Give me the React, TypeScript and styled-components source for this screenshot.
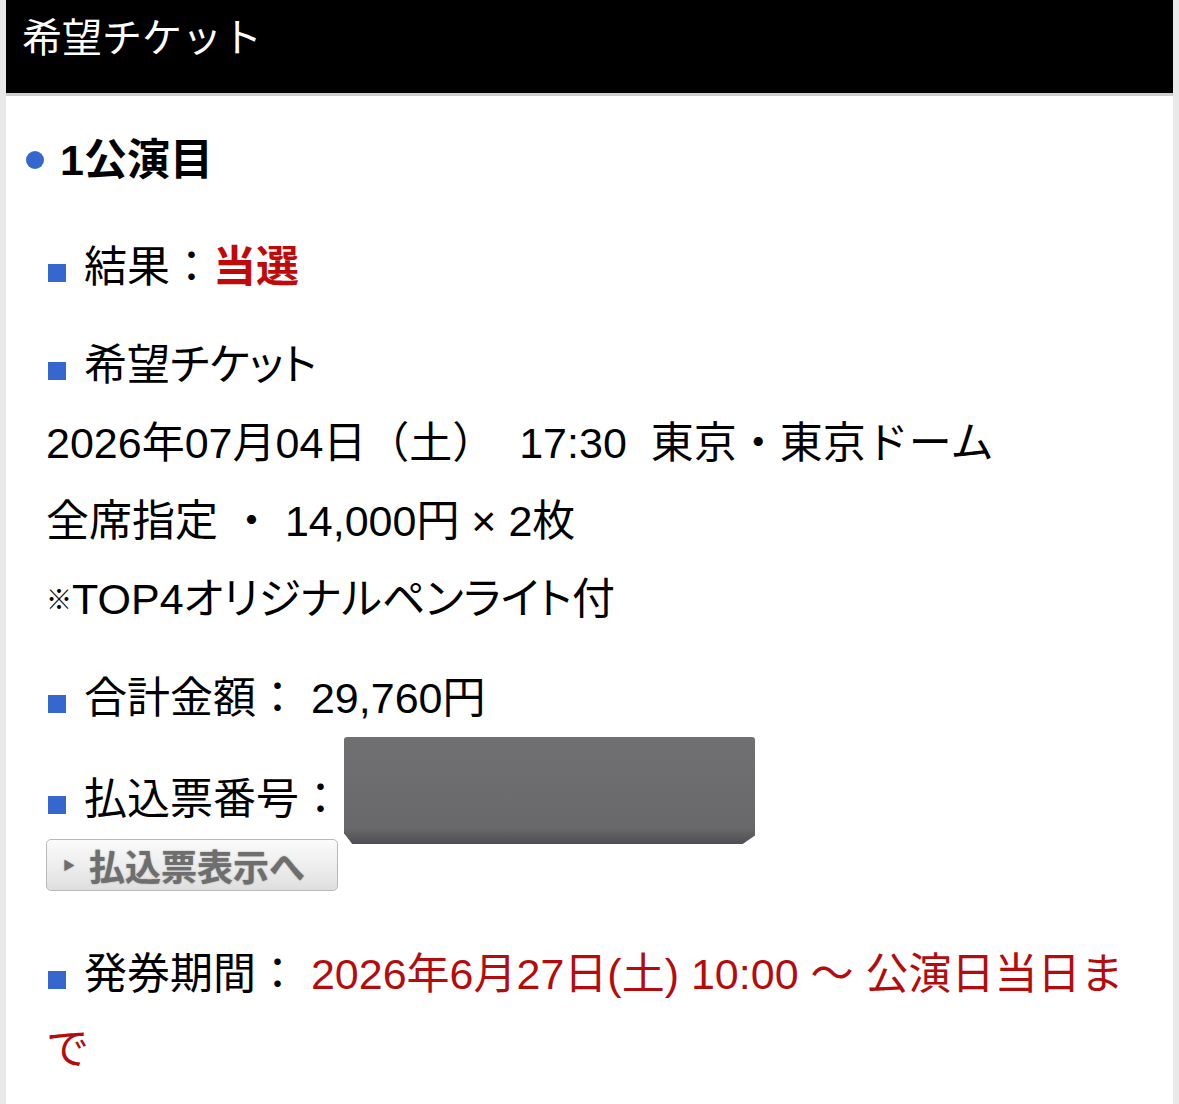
import React from 'react';
import styled, { createGlobalStyle } from 'styled-components';

const GlobalStyle = createGlobalStyle`
  html, body {
    margin: 0;
    padding: 0;
    background: #e9e9e9;
  }
  body {
    font-family: "Liberation Sans", "Noto Sans CJK JP", sans-serif;
    color: #000;
  }
`;

const COLORS = {
  Blue: '#3567cf',
  Red: '#b40c0c',
  Win: '#c00a0a',
};

const Styled = {
  Panel: styled.div`
    margin: 0 6px;
    min-height: 1104px;
    background: #ffffff;
  `,
  Header: styled.div`
    height: 93px;
    background: #000;
    border-bottom: 3px solid #cecece;
    color: #fff;
    font-size: 40px;
    line-height: 76px;
    padding-left: 16px;
  `,
  Body: styled.div`
    padding: 25px 30px 0 40px;
    font-size: 43px;
    line-height: 78px;
  `,
};

// iOS lays kana out with proportional widths
const Kana = styled.span`
  font-feature-settings: "palt";
`;

// the reference mark is drawn small, half width
const Note = styled.span`
  font-size: 26px;
  line-height: 0;
  vertical-align: 0.2em;
`;

const Title = {
  Row: styled.div`
    display: flex;
    align-items: center;
    margin-left: -20px;
    margin-bottom: 29px;
  `,
  Dot: styled.span`
    width: 18px;
    height: 18px;
    border-radius: 50%;
    background: ${COLORS.Blue};
    margin-right: 16px;
  `,
  Text: styled.span`
    font-weight: 700;
  `,
};

const Item = {
  Row: styled.div<{ gap?: number; lh?: number }>`
    margin-bottom: ${(p) => p.gap ?? 20}px;
    line-height: ${(p) => p.lh ?? 78}px;
  `,
  Square: styled.span`
    display: inline-block;
    width: 18px;
    height: 18px;
    background: ${COLORS.Blue};
    margin: 0 18px 0 2px;
    vertical-align: 0;
  `,
  Win: styled.span`
    color: ${COLORS.Win};
    font-weight: 700;
  `,
  Period: styled.span`
    color: ${COLORS.Red};
  `,
};

const Slip = {
  Row: styled.div`
    display: flex;
    align-items: flex-end;
  `,
  Label: styled.span`
    margin-bottom: 6px;
  `,
  Masked: styled.div`
    width: 411px;
    height: 107px;
    margin-left: 2px;
    background: linear-gradient(180deg, #707072 0%, #69696b 85%, #4e4e54 100%);
    border-radius: 3px 3px 0 0;
    clip-path: polygon(0 0, 100% 0, 100% 92%, 97% 100%, 2% 100%, 0 90%);
  `,
  Button: styled.button`
    display: flex;
    align-items: center;
    width: 292px;
    height: 52px;
    margin: -5px 0 46px;
    padding: 0 0 0 16px;
    border: 1px solid #b9b9b9;
    border-radius: 5px;
    background: linear-gradient(180deg, #fbfbfb 0%, #ededed 55%, #dedede 100%);
    color: #6e6e6e;
    font-family: "Noto Sans CJK JP", sans-serif;
    font-size: 36px;
    font-weight: 700;
    line-height: 1;
    text-shadow: 0 0 1.5px rgba(100, 100, 100, 0.7);
  `,
  Arrow: styled.span`
    font-size: 12px;
    margin-right: 14px;
  `,
};

const Lines = styled.div`
  margin-bottom: 21px;
`;

function App() {
  return (
    <>
      <GlobalStyle />
      <Styled.Panel>
        <Styled.Header>希望チケット</Styled.Header>
        <Styled.Body>
          <Title.Row>
            <Title.Dot />
            <Title.Text>1公演目</Title.Text>
          </Title.Row>

          <Item.Row>
            <Item.Square />
            結果：<Item.Win>当選</Item.Win>
          </Item.Row>

          <Lines>
            <div>
              <Item.Square />
              希望<Kana>チケット</Kana>
            </div>
            <div>2026年07月04日（土）&nbsp;&nbsp;17:30&nbsp;&nbsp;東京・東京ドーム</div>
            <div>全席指定 ・ 14,000円 × 2枚</div>
            <div>
              <Note>※</Note>TOP4<Kana>オリジナルペンライト</Kana>付
            </div>
          </Lines>

          <Item.Row gap={0}>
            <Item.Square />
            合計金額： 29,760円
          </Item.Row>

          <Slip.Row>
            <Slip.Label>
              <Item.Square />
              払込票番号：
            </Slip.Label>
            <Slip.Masked />
          </Slip.Row>
          <Slip.Button>
            <Slip.Arrow>▶</Slip.Arrow>
            払込票表示へ
          </Slip.Button>

          <Item.Row lh={75}>
            <Item.Square />
            <span>発券期間： </span>
            <Item.Period>2026年6月27日(土) 10:00 〜 公演日当日まで</Item.Period>
          </Item.Row>
        </Styled.Body>
      </Styled.Panel>
    </>
  );
}

export default App;
